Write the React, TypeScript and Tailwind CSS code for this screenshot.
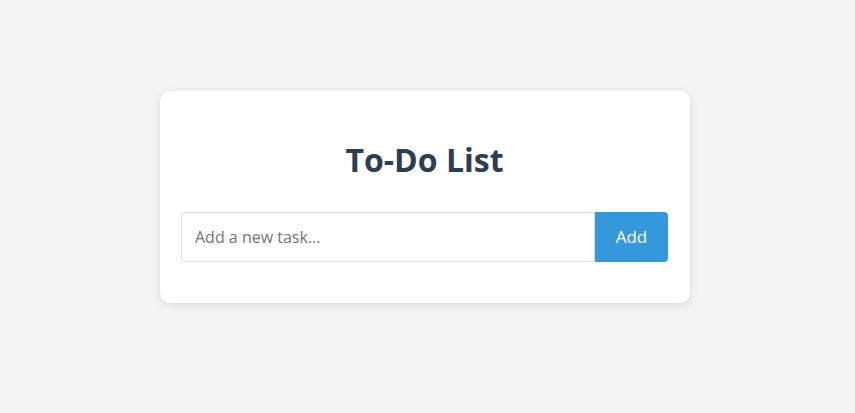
export default function App() {
  return (
    <div
      className="min-h-[413px] w-full bg-[#f4f4f4] pt-[91px]"
      style={{ fontFamily: '"Open Sans", "Noto Sans", sans-serif' }}
    >
      <div className="ml-[160px] w-[530px] rounded-[10px] bg-white pl-[21px] pr-[22px] pt-[48px] pb-[41px] shadow-[0_2px_10px_rgba(0,0,0,0.1)]">
        <h1 className="mb-[31px] text-center text-[32px] font-bold leading-[42px] text-[#2c3e50]">
          To-Do List
        </h1>
        <div className="flex h-[50px]">
          <input
            type="text"
            placeholder="Add a new task..."
            className="h-full flex-1 rounded-l-[4px] border border-[#dddddd] px-[13px] text-[16px] text-[#333] outline-none placeholder:text-[#757575]"
          />
          <button className="h-full w-[73px] rounded-r-[4px] bg-[#3498db] text-[17px] text-white">
            Add
          </button>
        </div>
      </div>
    </div>
  );
}
